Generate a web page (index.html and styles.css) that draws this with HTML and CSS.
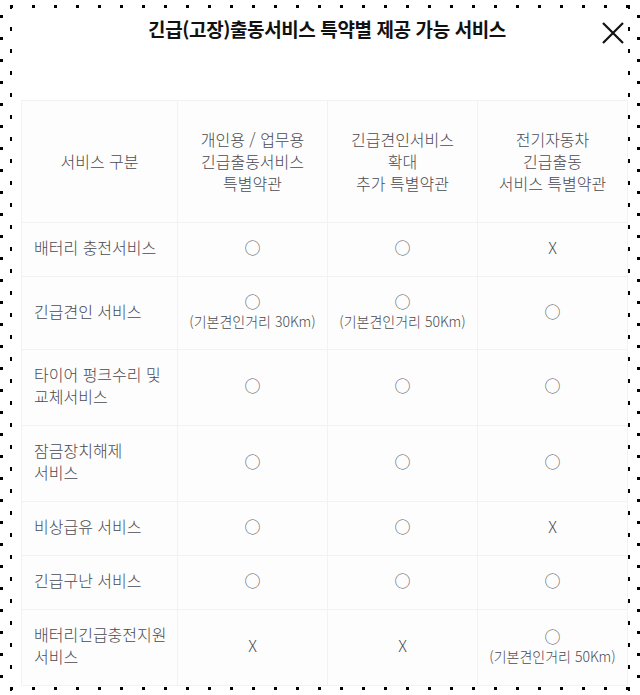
FILE: index.html
```html
<!DOCTYPE html>
<html lang="ko">
<head>
<meta charset="utf-8">
<title>긴급(고장)출동서비스 특약별 제공 가능 서비스</title>
<link rel="stylesheet" href="styles.css">
</head>
<body>
<div class="modal">
  <h1 class="modal-title">긴급(고장)출동서비스 특약별 제공 가능 서비스</h1>
  <button class="close" aria-label="닫기">
    <svg width="24" height="24" viewBox="0 0 24 24"><path d="M2 2 L22 22 M22 2 L2 22" stroke="#111" stroke-width="2.2" fill="none"/></svg>
  </button>
  <div class="table-wrap">
    <table class="svc">
      <colgroup><col class="c1"><col class="c2"><col class="c2"><col class="c2"></colgroup>
      <thead>
        <tr>
          <th>서비스 구분</th>
          <th>개인용 / 업무용<br>긴급출동서비스<br>특별약관</th>
          <th>긴급견인서비스<br>확대<br>추가 특별약관</th>
          <th>전기자동차<br>긴급출동<br>서비스 특별약관</th>
        </tr>
      </thead>
      <tbody>
        <tr><td class="name">배터리 충전서비스</td><td>○</td><td>○</td><td>X</td></tr>
        <tr><td class="name">긴급견인 서비스</td><td>○<span class="note">(기본견인거리 30Km)</span></td><td>○<span class="note">(기본견인거리 50Km)</span></td><td>○</td></tr>
        <tr><td class="name">타이어 펑크수리 및<br>교체서비스</td><td>○</td><td>○</td><td>○</td></tr>
        <tr><td class="name">잠금장치해제<br>서비스</td><td>○</td><td>○</td><td>○</td></tr>
        <tr><td class="name">비상급유 서비스</td><td>○</td><td>○</td><td>X</td></tr>
        <tr><td class="name">긴급구난 서비스</td><td>○</td><td>○</td><td>○</td></tr>
        <tr><td class="name">배터리긴급충전지원<br>서비스</td><td>X</td><td>X</td><td>○<span class="note">(기본견인거리 50Km)</span></td></tr>
      </tbody>
    </table>
  </div>
</div>
</body>
</html>
```
FILE: styles.css
```css
html, body {
  margin: 0;
  padding: 0;
  background: #fff;
}
body {
  font-family: "Noto Sans CJK KR", "Noto Sans", sans-serif;
  color: #4a4a52;
}
.modal {
  position: relative;
  width: 640px;
  height: 695px;
  overflow: hidden;
  box-sizing: border-box;
  padding: 15px 13px 0 21px;
  background-color: #fff;
  background-image:
    linear-gradient(to right, #000 3px, transparent 3px),
    linear-gradient(to right, #000 3px, transparent 3px),
    linear-gradient(#000 3px, transparent 3px),
    linear-gradient(#000 4px, transparent 4px),
    linear-gradient(#000 3px, transparent 3px),
    linear-gradient(#000 4px, transparent 4px);
  background-size: 22px 3px, 22px 3px, 3px 22px, 2px 22px, 3px 22px, 2px 22px;
  background-position: 10px 5px, 10px 687px, 0 15px, 10px 27px, 637px 15px, 628px 27px;
  background-repeat: repeat-x, repeat-x, repeat-y, repeat-y, repeat-y, repeat-y;
}
.modal-title {
  margin: 0;
  height: 85px;
  padding-left: 6px;
  font-size: 19px;
  line-height: 28px;
  font-weight: 700;
  color: #111;
  text-align: center;
  letter-spacing: -0.4px;
}
.close {
  position: absolute;
  top: 21px;
  left: 601px;
  width: 24px;
  height: 24px;
  padding: 0;
  border: 0;
  background: transparent;
}
.close svg { display: block; }
.table-wrap {
  width: 606px;
}
.svc {
  width: 606px;
  table-layout: fixed;
  border-collapse: collapse;
  background: #fdfdfd;
  font-size: 16px;
  letter-spacing: 0;
  font-weight: 300;
}
.c1 { width: 156px; }
.c2 { width: 150px; }
.svc th, .svc td {
  border: 1px solid #f2f2f2;
  text-align: center;
  vertical-align: middle;
  line-height: 22px;
  padding: 13px 6px 18px;
}
.svc th {
  font-weight: 300;
  padding-top: 27px;
  padding-bottom: 28px;
}
.svc td.name {
  text-align: left;
  padding-left: 12px;
}
.note {
  display: block;
  font-size: 14px;
  line-height: 19px;
  letter-spacing: 0;
  white-space: nowrap;
}
```
